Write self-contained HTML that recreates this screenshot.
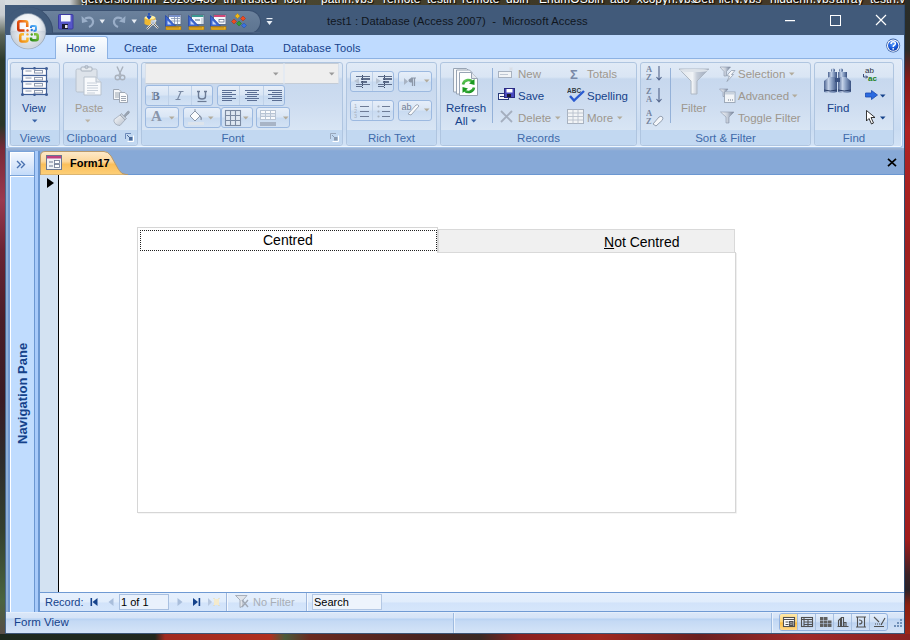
<!DOCTYPE html>
<html><head><meta charset="utf-8">
<style>
*{margin:0;padding:0;box-sizing:border-box}
html,body{width:910px;height:640px;overflow:hidden}
body{position:relative;font-family:"Liberation Sans",sans-serif;background:#2a2a22}
.a{position:absolute}
#desk-top{left:0;top:0;width:910px;height:5px;background:linear-gradient(90deg,#d8dcdf 0,#c9cdd0 70px,#3c3a2a 85px,#4a4630 300px,#3b3524 600px,#4b3c2a 910px)}
#desk-left{left:0;top:0;width:5px;height:640px;background:linear-gradient(180deg,#d2d6da 0,#c8ccd0 15px,#5a6458 35px,#2c3a2c 60px,#2a3628 125px,#7a2a3a 150px,#9a3a50 200px,#6a2434 250px,#4a1e28 320px,#3a1c24 400px,#2e2c2c 460px,#34402e 530px,#4a6440 600px,#5a4a48 640px)}
#desk-right{left:905px;top:0;width:5px;height:640px;background:linear-gradient(180deg,#2a2e2a 0,#2a2c28 50px,#8a1a1a 80px,#b02424 130px,#a02020 250px,#b02a2a 400px,#a01c1c 540px,#3a2228 575px,#2a2228 590px,#8a2010 605px,#a02a1a 640px)}
#desk-bot{left:0;top:634px;width:910px;height:6px;background:linear-gradient(90deg,#1e2a1e 0,#22281e 155px,#a02a20 165px,#b03020 270px,#4a5a3a 285px,#6a2a20 310px,#4a2420 420px,#3a2a24 480px,#8a2020 520px,#a02820 600px,#6a2020 700px,#a02a2a 800px,#8a2222 910px)}
#win{left:5px;top:5px;width:900px;height:629px;background:#8fb0d8}
#title{left:5px;top:5px;width:899px;height:30px;background:#415a7a}
#tabrow{left:6px;top:35px;width:898px;height:113px;background:#bfdbff}
#ribbon{left:7px;top:58px;width:896px;height:90px;background:linear-gradient(180deg,#e2ebf7 0,#d6e3f4 40px,#cadcf2 70px,#d3e3f6 88px,#e8f2fd 89px);border:1px solid #a6c3e8;border-top-color:#8db2e3;border-left-color:#9dbde6;border-radius:3px 3px 3px 3px;box-shadow:inset 1px 0 0 #f4f9fe,inset -1px 0 0 #eef5fd, inset 0 -1px 0 #f0f7fe}
.grp{position:absolute;top:62px;height:84px;border:1px solid #afc5e0;border-radius:3px;background:linear-gradient(180deg,#e0eaf6 0,#d9e5f4 14px,#c7d8ee 16px,#cddcf0 40px,#d8e5f4 67px)}
.glab{position:absolute;left:0;right:0;bottom:0;height:15px;background:#c2d8f1;color:#3e6aaa;font-size:11.5px;text-align:center;line-height:normal;padding-top:1.5px;border-radius:0 0 3px 3px;white-space:nowrap}
#navpane{left:10px;top:151px;width:25px;height:461px;background:#c0dcfe;border-left:1px solid #fff}
#docrow{left:40px;top:151px;width:864px;height:24px;background:#87a9d7;border-bottom:1px solid #6b97d1}
#recsel{left:40px;top:175px;width:18px;height:417px;background:#d3e2f2}
#form{left:58px;top:175px;width:846px;height:417px;background:#fff;border-left:1px solid #000}
#recbar{left:40px;top:592px;width:864px;height:20px;background:linear-gradient(180deg,#e6f0fd 0,#e1edfc 50%,#d2e3fa 55%,#d6e6fb 100%);border-top:1px solid #6f9ad3;border-bottom:1px solid #6f9ad3}
#status{left:5px;top:612px;width:899px;height:21px;background:linear-gradient(180deg,#f0f6fe 0,#dae7f8 1px,#d4e3f7 6px,#b6d1f2 7px,#c4d9f4 9px,#d3e3f7 20px)}
.tt{position:absolute;white-space:nowrap}
</style></head><body>
<div id="desk-top" class="a"></div>
<div id="desk-left" class="a"></div>
<div class="a" style="left:0;top:0;width:910px;height:5px;overflow:hidden"><div class="tt" style="left:81px;top:-8px;font-size:12px;color:#fff;text-shadow:1px 1px 1px #000">getversionnnn_20200430_thr trusted_locn</div><div class="tt" style="left:321px;top:-8px;font-size:12px;color:#fff;text-shadow:1px 1px 1px #000">pathn.vbs</div><div class="tt" style="left:383px;top:-8px;font-size:12px;color:#fff;text-shadow:1px 1px 1px #000">remote_testin</div><div class="tt" style="left:462px;top:-8px;font-size:12px;color:#fff;text-shadow:1px 1px 1px #000">remote_dbin</div><div class="tt" style="left:539px;top:-8px;font-size:12px;color:#fff;text-shadow:1px 1px 1px #000">EnumOSbin</div><div class="tt" style="left:610px;top:-8px;font-size:12px;color:#fff;text-shadow:1px 1px 1px #000">ado_xcopyn.vbs</div><div class="tt" style="left:692px;top:-8px;font-size:12px;color:#fff;text-shadow:1px 1px 1px #000">GetFileN.vbs</div><div class="tt" style="left:770px;top:-8px;font-size:12px;color:#fff;text-shadow:1px 1px 1px #000">hiddenn.vbs</div><div class="tt" style="left:836px;top:-8px;font-size:12px;color:#fff;text-shadow:1px 1px 1px #000">array_testn.vbs</div></div>

<div id="desk-right" class="a"></div>
<div id="desk-bot" class="a"></div>
<div id="win" class="a"></div>
<div id="title" class="a"></div>
<div id="tabrow" class="a"></div>
<!-- QAT -->
<div class="a" style="left:40px;top:10px;width:221px;height:24px;border-radius:0 12px 12px 0;background:#3a5070"></div>
<div class="a" style="left:40px;top:11px;width:220px;height:22px;border-radius:0 11px 11px 0;background:linear-gradient(180deg,#6b819c 0,#637a96 50%,#5d7490 100%)"></div>
<div class="a" style="left:40px;top:32px;width:220px;height:1px;background:#4a6080"></div>

<!-- QAT icons -->
<svg class="a" style="left:58px;top:14px" width="16" height="16" viewBox="0 0 16 16">
<rect x="0.5" y="0.5" width="14.5" height="14.5" rx="1" fill="#5656c8" stroke="#3a3aa0"/>
<rect x="3" y="1" width="9.5" height="6.5" fill="#f4f6fb"/>
<rect x="4" y="10" width="6" height="5" fill="#1a1a30"/><rect x="7" y="11" width="2.5" height="3" fill="#e8e8f0"/>
</svg>
<svg class="a" style="left:81px;top:15px" width="14" height="13" viewBox="0 0 14 13">
<path d="M4 3.5 Q11 1 12 6 Q12.5 10 8 12" fill="none" stroke="#9aaec8" stroke-width="2.2"/>
<path d="M0.5 1 L1 8 L7 6.5Z" fill="#9aaec8"/>
</svg>
<svg class="a" style="left:112px;top:15px" width="14" height="13" viewBox="0 0 14 13">
<path d="M10 3.5 Q3 1 2 6 Q1.5 10 6 12" fill="none" stroke="#9aaec8" stroke-width="2.2"/>
<path d="M13.5 1 L13 8 L7 6.5Z" fill="#9aaec8"/>
</svg>
<svg class="a" style="left:99px;top:19px" width="7" height="5"><path d="M0.5 0.5 L6 0.5 L3.2 4.5Z" fill="#e6ebf2"/></svg>
<svg class="a" style="left:131px;top:19px" width="7" height="5"><path d="M0.5 0.5 L6 0.5 L3.2 4.5Z" fill="#e6ebf2"/></svg>
<svg class="a" style="left:143px;top:13px" width="17" height="17" viewBox="0 0 17 17">
<ellipse cx="7" cy="5" rx="5.5" ry="2.5" fill="#fff0a0"/>
<path d="M1.5 5 L1.5 11 Q7 14 12.5 11 L12.5 5 Q7 8 1.5 5Z" fill="#f0b830"/>
<path d="M6 0 L6 5 M4 3 L6 5.5 L8 3" stroke="#1a4ac0" stroke-width="1.5" fill="none"/>
<path d="M4 16 L11 9 M9 9 L15 15 M11 9 L13 7" stroke="#e8e8e8" stroke-width="2"/>
<path d="M4 16 L11 9 M9 9 L15 15" stroke="#404040" stroke-width="0.8"/>
<circle cx="10" cy="9" r="2.5" fill="#c0d0e8" opacity="0.8"/>
</svg>
<svg class="a" style="left:165px;top:14px" width="17" height="16" viewBox="0 0 17 16">
<rect x="3.5" y="0.5" width="12.5" height="10" fill="#f4f8fc" stroke="#60708a"/>
<rect x="4" y="1" width="11.5" height="2" fill="#7890c8"/>
<path d="M6 4.5 h9 M6 7 h9 M9.5 3 v7.5 M12.5 3 v7.5" stroke="#8090b0" stroke-width="0.8"/>
<path d="M0.5 1.5 L0.5 12.5 L11 12.5Z" fill="#3c66d0" stroke="#2a4aa8" stroke-width="0.8"/>
<path d="M2.5 6.5 L2.5 10.5 L6.5 10.5Z" fill="#c8d8f8"/>
<rect x="1" y="12.5" width="15" height="3.5" fill="#e8b020" stroke="#a07010" stroke-width="0.6"/>
<path d="M3 13 v1.5 M5 13 v1.5 M7 13 v1.5 M9 13 v1.5 M11 13 v1.5 M13 13 v1.5" stroke="#805010" stroke-width="0.6"/>
</svg><svg class="a" style="left:188px;top:14px" width="17" height="16" viewBox="0 0 17 16">
<rect x="3.5" y="0.5" width="12.5" height="10" fill="#f4f8fc" stroke="#60708a"/>
<rect x="4" y="1" width="11.5" height="2" fill="#3a9890"/>
<rect x="7" y="5" width="5" height="2" fill="#a0b0c0"/><rect x="13" y="4" width="2" height="6" fill="#d0d8e0"/>
<path d="M0.5 1.5 L0.5 12.5 L11 12.5Z" fill="#3c66d0" stroke="#2a4aa8" stroke-width="0.8"/>
<path d="M2.5 6.5 L2.5 10.5 L6.5 10.5Z" fill="#c8d8f8"/>
<rect x="1" y="12.5" width="15" height="3.5" fill="#e8b020" stroke="#a07010" stroke-width="0.6"/>
<path d="M3 13 v1.5 M5 13 v1.5 M7 13 v1.5 M9 13 v1.5 M11 13 v1.5 M13 13 v1.5" stroke="#805010" stroke-width="0.6"/>
</svg><svg class="a" style="left:210px;top:14px" width="17" height="16" viewBox="0 0 17 16">
<rect x="3.5" y="0.5" width="12.5" height="10" fill="#f4f8fc" stroke="#60708a"/>
<rect x="4" y="1" width="11.5" height="2" fill="#d04878"/>
<rect x="9" y="5.5" width="5" height="2.5" fill="#fff" stroke="#506080" stroke-width="0.7"/>
<path d="M0.5 1.5 L0.5 12.5 L11 12.5Z" fill="#3c66d0" stroke="#2a4aa8" stroke-width="0.8"/>
<path d="M2.5 6.5 L2.5 10.5 L6.5 10.5Z" fill="#c8d8f8"/>
<rect x="1" y="12.5" width="15" height="3.5" fill="#e8b020" stroke="#a07010" stroke-width="0.6"/>
<path d="M3 13 v1.5 M5 13 v1.5 M7 13 v1.5 M9 13 v1.5 M11 13 v1.5 M13 13 v1.5" stroke="#805010" stroke-width="0.6"/>
</svg>
<svg class="a" style="left:231px;top:13px" width="17" height="17" viewBox="0 0 17 17">
<path d="M6.5 0.5 L9 3 L6.5 5.5 L4 3Z" fill="#f0b818" stroke="#b08010" stroke-width="0.5"/>
<path d="M12 3 L14.5 5.5 L12 8 L9.5 5.5Z" fill="#f04a20" stroke="#a03010" stroke-width="0.5"/>
<path d="M3 6 L5.5 8.5 L3 11 L0.5 8.5Z" fill="#f04a20" stroke="#a03010" stroke-width="0.5"/>
<path d="M8 8 L10.5 10.5 L8 13 L5.5 10.5Z" fill="#30a030" stroke="#207020" stroke-width="0.5"/>
<path d="M13 10 L15.5 12.5 L13 15 L10.5 12.5Z" fill="#3a70e0" stroke="#2050a0" stroke-width="0.5"/>
</svg>
<svg class="a" style="left:266px;top:18px" width="7" height="8" viewBox="0 0 7 8">
<rect x="0.5" y="0" width="6" height="1.2" fill="#e8eef6"/>
<path d="M0.5 3 L6.5 3 L3.5 7Z" fill="#e8eef6"/>
</svg>
<div class="tt" style="left:327px;top:15px;font-size:11.2px;letter-spacing:0.09px;color:#10161e">test1 : Database (Access 2007)&nbsp; -&nbsp; Microsoft Access</div>
<div class="a" style="left:785px;top:20px;width:10px;height:1px;background:#fff;box-shadow:0 0.5px 0 rgba(255,255,255,0.5)"></div>
<div class="a" style="left:830px;top:15px;width:11px;height:11px;border:1px solid #fff"></div>
<svg class="a" style="left:875px;top:14px" width="12" height="12" viewBox="0 0 12 12"><path d="M1 1 L11 11 M11 1 L1 11" stroke="#fff" stroke-width="1.2"/></svg>
<!-- office button ring -->
<div class="a" style="left:5px;top:5px;width:60px;height:28px;overflow:hidden"><div class="a" style="left:-1px;top:2px;width:49px;height:49px;border-radius:50%;background:#415a7a;border:none;box-shadow:inset -1px 0 0 #3a4f6e"></div></div>
<svg class="a" style="left:9px;top:12px" width="39" height="39" viewBox="0 0 39 39">
<defs>
<radialGradient id="ob" cx="50%" cy="35%" r="60%"><stop offset="0" stop-color="#ffffff"/><stop offset="0.55" stop-color="#eef1f5"/><stop offset="1" stop-color="#b9c3cf"/></radialGradient>
<linearGradient id="obr" x1="0" y1="0" x2="0" y2="1"><stop offset="0" stop-color="#e8a070"/><stop offset="1" stop-color="#d04010"/></linearGradient>
</defs>
<circle cx="19.1" cy="19.3" r="18" fill="#9aa8b8"/>
<circle cx="19.1" cy="19.3" r="17.2" fill="url(#ob)"/>
<defs><linearGradient id="ob2" x1="0" y1="0" x2="0" y2="1"><stop offset="0" stop-color="#ffffff" stop-opacity="0"/><stop offset="0.45" stop-color="#ffffff" stop-opacity="0"/><stop offset="0.5" stop-color="#a8b4c4" stop-opacity="0.3"/><stop offset="0.7" stop-color="#ffffff" stop-opacity="0.15"/><stop offset="1" stop-color="#ffffff" stop-opacity="0.4"/></linearGradient></defs><circle cx="19.1" cy="19.3" r="17.2" fill="url(#ob2)"/>
<!-- red -->
<defs>
<linearGradient id="lr" x1="0" y1="1" x2="1" y2="0"><stop offset="0" stop-color="#c83008"/><stop offset="0.6" stop-color="#e85a10"/><stop offset="1" stop-color="#f8a030"/></linearGradient>
<linearGradient id="lb" x1="0" y1="1" x2="1" y2="0"><stop offset="0" stop-color="#1a6ad8"/><stop offset="1" stop-color="#60b8f8"/></linearGradient>
<linearGradient id="ly" x1="0" y1="1" x2="1" y2="0"><stop offset="0" stop-color="#f08810"/><stop offset="1" stop-color="#ffd040"/></linearGradient>
<linearGradient id="lg" x1="0" y1="1" x2="1" y2="0"><stop offset="0" stop-color="#2a8a18"/><stop offset="1" stop-color="#8ac840"/></linearGradient>
</defs>
<path d="M18.25 15 L18.25 11 Q18.25 9.25 16.5 9.25 L11 9.25 Q9.25 9.25 9.25 11 L9.25 16.75 Q9.25 18.5 11 18.5 L15.5 18.5" fill="none" stroke="url(#lr)" stroke-width="2.6"/>
<path d="M22 16 L22 15 Q22 14 23 14 L26 14 Q27 14 27 15 L27 17.75 Q27 18.75 26 18.75 L24.5 18.75" fill="none" stroke="url(#lb)" stroke-width="2"/>
<path d="M15 22.25 L13 22.25 Q11.25 22.25 11.25 24 L11.25 27.75 Q11.25 29.5 13 29.5 L16.75 29.5 Q18.5 29.5 18.5 27.75 L18.5 25.5" fill="none" stroke="url(#ly)" stroke-width="2.6"/>
<path d="M25 22.25 L27 22.25 Q28.75 22.25 28.75 24 L28.75 26.5 Q28.75 28.25 27 28.25 L23.75 28.25 Q22 28.25 22 26.5 L22 25.5" fill="none" stroke="url(#lg)" stroke-width="2.6"/>
<circle cx="18.5" cy="18.5" r="1.2" fill="#e85010"/>
<circle cx="22.75" cy="18" r="1.2" fill="#2a78d8"/>
<circle cx="18.5" cy="22.4" r="1.2" fill="#f8b030"/>
<circle cx="22.75" cy="22.5" r="1.2" fill="#50a028"/>
</svg>


<!--TABS-->

<div class="a" style="left:55px;top:36px;width:53px;height:23px;border:1px solid #8db2e3;border-bottom:none;border-radius:3px 3px 0 0;background:linear-gradient(180deg,#fbfdff 0,#eef4fb 50%,#e4edf8 100%)"></div>
<div class="tt" style="left:66px;top:42px;font-size:11px;color:#15428b">Home</div>
<div class="tt" style="left:124px;top:42px;font-size:11px;color:#15428b">Create</div>
<div class="tt" style="left:187px;top:42px;font-size:11px;color:#15428b">External Data</div>
<div class="tt" style="left:283px;top:42px;font-size:11px;letter-spacing:0.15px;color:#15428b">Database Tools</div>
<svg class="a" style="left:885px;top:38px" width="16" height="16" viewBox="0 0 16 16">
<defs><radialGradient id="hg" cx="45%" cy="35%" r="65%"><stop offset="0" stop-color="#5a9cf8"/><stop offset="0.6" stop-color="#1c5ee0"/><stop offset="1" stop-color="#0e3ca8"/></radialGradient></defs>
<circle cx="8.2" cy="7.6" r="7" fill="#3a62a8"/>
<circle cx="8.2" cy="7.6" r="6.2" fill="#fff"/>
<circle cx="8.2" cy="7.6" r="5.2" fill="url(#hg)"/>
<path d="M6 6 Q6 3.8 8.2 3.8 Q10.4 3.8 10.4 5.6 Q10.4 6.9 9 7.5 Q8.2 7.9 8.2 9" fill="none" stroke="#fff" stroke-width="1.5"/>
<circle cx="8.2" cy="10.8" r="0.9" fill="#fff"/>
</svg>
<div id="ribbon" class="a"></div>
<div class="a" style="left:56px;top:58px;width:51px;height:2px;background:#e3ecf8"></div>
<div class="grp" style="left:10px;width:50px"><div class="glab">Views</div></div>
<div class="grp" style="left:63px;width:75px"><div class="glab" style="text-align:left;padding-left:2.5px;letter-spacing:0.1px">Clipboard</div></div>
<div class="grp" style="left:141px;width:202px"><div class="glab" style="padding-right:18px">Font</div></div>
<div class="grp" style="left:346px;width:91px"><div class="glab">Rich Text</div></div>
<div class="grp" style="left:440px;width:197px"><div class="glab">Records</div></div>
<div class="grp" style="left:640px;width:171px"><div class="glab">Sort &amp; Filter</div></div>
<div class="grp" style="left:814px;width:80px"><div class="glab">Find</div></div>

<!--RIB1-->
<!-- Views -->
<svg class="a" style="left:21px;top:67px" width="27" height="29" viewBox="0 0 27 29">
<rect x="1.5" y="1.5" width="24" height="7.0" fill="#fdfdfe" stroke="#3f5e96" stroke-width="1.2"/><rect x="1.5" y="8.5" width="24" height="6.0" fill="#fdfdfe" stroke="#3f5e96" stroke-width="1.2"/><rect x="1.5" y="14.5" width="24" height="7.0" fill="#fdfdfe" stroke="#3f5e96" stroke-width="1.2"/><rect x="1.5" y="21.5" width="24" height="6.0" fill="#fdfdfe" stroke="#3f5e96" stroke-width="1.2"/><rect x="13.5" y="3.5" width="8" height="2.5" fill="none" stroke="#8e9ab0" stroke-width="1"/><path d="M4.5 4.0 h6" stroke="#8e9ab0" stroke-width="1"/><rect x="13.5" y="10.5" width="8" height="2.5" fill="none" stroke="#8e9ab0" stroke-width="1"/><path d="M4.5 11.0 h6" stroke="#8e9ab0" stroke-width="1"/><rect x="13.5" y="16.5" width="8" height="2.5" fill="none" stroke="#8e9ab0" stroke-width="1"/><path d="M4.5 17.0 h6" stroke="#8e9ab0" stroke-width="1"/><rect x="13.5" y="23.5" width="8" height="2.5" fill="none" stroke="#8e9ab0" stroke-width="1"/><path d="M4.5 24.0 h6" stroke="#8e9ab0" stroke-width="1"/>
<g fill="#3f5e96"><circle cx="1.5" cy="1.5" r="1.5"/><circle cx="25.5" cy="1.5" r="1.5"/><circle cx="1.5" cy="27.5" r="1.5"/><circle cx="25.5" cy="27.5" r="1.5"/><rect x="12.5" y="0" width="2" height="2.5"/><rect x="0" y="13.5" width="2" height="2"/><rect x="25" y="13.5" width="2" height="2"/><rect x="12.5" y="26.5" width="2" height="2.5"/></g>
</svg>
<div class="tt" style="left:22px;top:102px;font-size:11px;color:#15428b">View</div>
<svg class="a" style="left:32px;top:119px" width="6" height="4"><path d="M0 0.5 L5.5 0.5 L2.75 3.5Z" fill="#3a64a8"/></svg>
<!-- Clipboard -->
<svg class="a" style="left:75px;top:65px" width="28" height="32" viewBox="0 0 28 32">
<rect x="1" y="4" width="21" height="23" rx="1.5" fill="#dde3ea" stroke="#b8c2ce"/>
<rect x="6" y="2" width="11" height="4" rx="1" fill="#e6ebf0" stroke="#a8b2be"/>
<circle cx="11.5" cy="2" r="1.6" fill="none" stroke="#a8b2be"/>
<path d="M9 12 L21 12 L26 17 L26 30 L9 30Z" fill="#f8fafc" stroke="#b8c2ce"/>
<path d="M21 12 L21 17 L26 17" fill="#e0e6ec" stroke="#b8c2ce"/>
<path d="M12 18 h10 M12 20.5 h11 M12 23 h11 M12 25.5 h11 M12 28 h8" stroke="#c8d0da" stroke-width="1"/>
</svg>
<div class="tt" style="left:75px;top:102px;font-size:11px;color:#a39c92">Paste</div>
<svg class="a" style="left:85px;top:119px" width="6" height="4"><path d="M0 0.5 L5.5 0.5 L2.75 3.5Z" fill="#bcb4a6"/></svg>
<svg class="a" style="left:114px;top:66px" width="12" height="15" viewBox="0 0 12 15">
<path d="M3 0.5 L7 9 M9 0.5 L5 9" stroke="#a9b1bc" stroke-width="1.4"/>
<circle cx="3.5" cy="11.5" r="2.3" fill="none" stroke="#a9b1bc" stroke-width="1.4"/>
<circle cx="8.5" cy="11.5" r="2.3" fill="none" stroke="#a9b1bc" stroke-width="1.4"/>
</svg>
<svg class="a" style="left:113px;top:89px" width="16" height="14" viewBox="0 0 16 14">
<path d="M0.5 0.5 h5.5 l2.5 2.5 v7.5 h-8z" fill="#f6f8fa" stroke="#9ea8b6"/>
<path d="M6.5 3.5 h5.5 l2.5 2.5 v7.5 h-8z" fill="#fafbfc" stroke="#9ea8b6"/>
<path d="M2 4 h4 M2 6 h4 M2 8 h4 M8 7.5 h5 M8 9.5 h5 M8 11.5 h5" stroke="#8892a0" stroke-width="0.8"/>
</svg>
<svg class="a" style="left:113px;top:110px" width="17" height="16" viewBox="0 0 17 16">
<defs><linearGradient id="fp" x1="0" y1="0" x2="1" y2="1"><stop offset="0" stop-color="#fafbfc"/><stop offset="1" stop-color="#b8c0cc"/></linearGradient></defs>
<path d="M11 5.5 L14.5 1.5 Q15.5 0.8 16.2 1.5 Q16.8 2.3 16 3.2 L12 7Z" fill="#9aa4b2" stroke="#7e8896" stroke-width="0.5"/>
<path d="M8.5 3.5 L13.5 8.5 L12 10 L7 5Z" fill="#c4ccd6" stroke="#8c96a4" stroke-width="0.6"/>
<path d="M7 5 L12 10 L7 15.5 Q4 15.5 2 13.5 Q0.5 11.5 1 9.5Z" fill="url(#fp)" stroke="#98a2b0" stroke-width="0.7"/>
</svg>
<svg class="a" style="left:125px;top:133px" width="9" height="9" viewBox="0 0 9 9">
<path d="M0.5 6 V0.5 H6" fill="none" stroke="#6a88b8" stroke-width="1"/>
<path d="M2.5 8.5 H8.5 V2.5" fill="none" stroke="#ffffff" stroke-width="1"/>
<rect x="4" y="4" width="3.5" height="3.5" fill="#4a6a9a"/>
<path d="M2 2 L5 5" stroke="#4a6a9a" stroke-width="1"/>
</svg>
<!-- Font -->
<div class="a" style="left:145px;top:63px;width:139px;height:21px;background:#eeeeee;border:1px solid #c4ccd6;border-left-color:#d8e0ea;border-right-color:#e4eaf2"></div>
<svg class="a" style="left:273px;top:72px" width="6" height="4"><path d="M0 0.5 L5.5 0.5 L2.75 3.5Z" fill="#9a9a9a"/></svg>
<div class="a" style="left:284px;top:63px;width:55px;height:21px;background:#eeeeee;border:1px solid #c4ccd6;border-left-color:#e4eaf2;border-right-color:#d8e0ea"></div>
<svg class="a" style="left:329px;top:72px" width="6" height="4"><path d="M0 0.5 L5.5 0.5 L2.75 3.5Z" fill="#9a9a9a"/></svg>
<div class="a" style="left:145px;top:85px;width:68px;height:21px;border:1px solid #9cb9e0;border-radius:3px;background:linear-gradient(180deg,#e6eef9 0,#dae6f5 45%,#c9dbf1 55%,#d3e2f4 100%)"></div><div class="a" style="left:168px;top:86px;width:1px;height:19px;background:#bfd1e8"></div><div class="a" style="left:191px;top:86px;width:1px;height:19px;background:#bfd1e8"></div><div class="a" style="left:217px;top:85px;width:68px;height:21px;border:1px solid #9cb9e0;border-radius:3px;background:linear-gradient(180deg,#e6eef9 0,#dae6f5 45%,#c9dbf1 55%,#d3e2f4 100%)"></div><div class="a" style="left:239px;top:86px;width:1px;height:19px;background:#bfd1e8"></div><div class="a" style="left:263px;top:86px;width:1px;height:19px;background:#bfd1e8"></div><div class="a" style="left:145px;top:107px;width:34px;height:21px;border:1px solid #9cb9e0;border-radius:3px;background:linear-gradient(180deg,#e6eef9 0,#dae6f5 45%,#c9dbf1 55%,#d3e2f4 100%)"></div><div class="a" style="left:183px;top:107px;width:38px;height:21px;border:1px solid #9cb9e0;border-radius:3px;background:linear-gradient(180deg,#e6eef9 0,#dae6f5 45%,#c9dbf1 55%,#d3e2f4 100%)"></div><div class="a" style="left:221px;top:107px;width:32px;height:21px;border:1px solid #9cb9e0;border-radius:3px;background:linear-gradient(180deg,#e6eef9 0,#dae6f5 45%,#c9dbf1 55%,#d3e2f4 100%)"></div><div class="a" style="left:256px;top:107px;width:34px;height:21px;border:1px solid #9cb9e0;border-radius:3px;background:linear-gradient(180deg,#e6eef9 0,#dae6f5 45%,#c9dbf1 55%,#d3e2f4 100%)"></div>
<svg class="a" style="left:148px;top:88px" width="64" height="16" viewBox="0 0 64 16">
<text x="3.5" y="11.5" font-family="Liberation Serif" font-weight="bold" font-size="12.5" fill="#6c7b95">B</text>
<path d="M5.5 3.5 v8" stroke="#c8d2e0" stroke-width="0.6"/>
<path d="M33 3.5 L29.5 11.5 M30.5 3.5 h5 M27.5 11.5 h5" stroke="#7a8aa4" stroke-width="1.2" fill="none"/>
<path d="M50.5 3.5 v5 Q50.5 11 54 11 Q57.5 11 57.5 8.5 v-5 M49 3.5 h3 M56 3.5 h3" stroke="#6c7b95" stroke-width="1.4" fill="none"/>
<path d="M49.5 13.5 h9" stroke="#6c7b95" stroke-width="1.2"/>
</svg>
<div class="tt" style="left:151px;top:108px;font-family:'Liberation Serif',serif;font-weight:bold;font-size:15px;color:#8a96aa">A</div>
<svg class="a" style="left:217px;top:85px" width="70" height="20" viewBox="0 0 70 20">
<g stroke="#5a6e94" stroke-width="1">
<path d="M5 5.5 h14 M5 7.5 h10 M5 9.5 h14 M5 11.5 h10 M5 13.5 h14 M5 15.5 h10"/>
<path d="M28 5.5 h14 M30 7.5 h10 M28 9.5 h14 M30 11.5 h10 M28 13.5 h14 M30 15.5 h10"/>
<path d="M51 5.5 h14 M55 7.5 h10 M51 9.5 h14 M55 11.5 h10 M51 13.5 h14 M55 15.5 h10"/>
</g></svg>
<svg class="a" style="left:169px;top:116px" width="6" height="4"><path d="M0 0.5 L5.5 0.5 L2.75 3.5Z" fill="#b2ab9c"/></svg>
<svg class="a" style="left:187px;top:109px" width="18" height="16" viewBox="0 0 18 16">
<path d="M3 7 L8 2 L13 7 L8 12Z" fill="#fafbfc" stroke="#8a96a8" stroke-width="1"/>
<path d="M8 2 L8 0" stroke="#8a96a8"/>
<path d="M13 7 Q15 9 14 11" stroke="#8a96a8" fill="none" stroke-width="1.4"/>
<rect x="1" y="13" width="16" height="3" fill="#dde4ec"/>
</svg>
<svg class="a" style="left:208px;top:116px" width="6" height="4"><path d="M0 0.5 L5.5 0.5 L2.75 3.5Z" fill="#b2ab9c"/></svg>
<svg class="a" style="left:224px;top:109px" width="18" height="18" viewBox="0 0 18 18">
<rect x="1" y="1" width="15" height="15" fill="#dfe7f2"/>
<g stroke="#7b8aa2" stroke-width="1.1" fill="none"><rect x="1.5" y="1.5" width="15" height="15"/><path d="M6.5 1.5 v15 M11.5 1.5 v15 M1.5 6.5 h15 M1.5 11.5 h15"/></g>
</svg>
<svg class="a" style="left:243px;top:116px" width="6" height="4"><path d="M0 0.5 L5.5 0.5 L2.75 3.5Z" fill="#b2ab9c"/></svg>
<svg class="a" style="left:260px;top:110px" width="17" height="17" viewBox="0 0 17 17">
<rect x="0" y="0" width="16" height="10" fill="#b8c4d4"/>
<g fill="#fafbfd"><rect x="1" y="1" width="4" height="2"/><rect x="6" y="1" width="4" height="2"/><rect x="11" y="1" width="4" height="2"/><rect x="1" y="7" width="4" height="2"/><rect x="6" y="7" width="4" height="2"/><rect x="11" y="7" width="4" height="2"/></g>
<g fill="#dfe5ee"><rect x="1" y="4" width="4" height="2"/><rect x="6" y="4" width="4" height="2"/><rect x="11" y="4" width="4" height="2"/></g>
<rect x="0" y="12" width="16" height="4" fill="#a8b4c6"/>
</svg>
<svg class="a" style="left:283px;top:116px" width="6" height="4"><path d="M0 0.5 L5.5 0.5 L2.75 3.5Z" fill="#b2ab9c"/></svg>
<svg class="a" style="left:330px;top:133px" width="9" height="9" viewBox="0 0 9 9">
<path d="M0.5 6 V0.5 H6" fill="none" stroke="#98a6ba" stroke-width="1"/>
<path d="M2.5 8.5 H8.5 V2.5" fill="none" stroke="#ffffff" stroke-width="1"/>
<rect x="4" y="4" width="3.5" height="3.5" fill="#8a9ab0"/>
<path d="M2 2 L5 5" stroke="#8a9ab0" stroke-width="1"/>
</svg>

<!--RIB2-->
<!-- Rich text -->
<div class="a" style="left:350px;top:71px;width:44px;height:21px;border:1px solid #9cb9e0;border-radius:3px;background:linear-gradient(180deg,#e6eef9 0,#dae6f5 45%,#c9dbf1 55%,#d3e2f4 100%)"></div><div class="a" style="left:372px;top:72px;width:1px;height:19px;background:#bfd1e8"></div><div class="a" style="left:398px;top:71px;width:34px;height:21px;border:1px solid #9cb9e0;border-radius:3px;background:linear-gradient(180deg,#e6eef9 0,#dae6f5 45%,#c9dbf1 55%,#d3e2f4 100%)"></div><div class="a" style="left:350px;top:100px;width:44px;height:21px;border:1px solid #9cb9e0;border-radius:3px;background:linear-gradient(180deg,#e6eef9 0,#dae6f5 45%,#c9dbf1 55%,#d3e2f4 100%)"></div><div class="a" style="left:372px;top:101px;width:1px;height:19px;background:#bfd1e8"></div><div class="a" style="left:398px;top:100px;width:34px;height:21px;border:1px solid #9cb9e0;border-radius:3px;background:linear-gradient(180deg,#e6eef9 0,#dae6f5 45%,#c9dbf1 55%,#d3e2f4 100%)"></div>
<svg class="a" style="left:350px;top:71px" width="84" height="52" viewBox="0 0 84 52">
<g stroke="#5e6e8c" stroke-width="1">
<path d="M6 5.5 h14 M6 13.5 h14 M6 15.5 h6 M28 5.5 h14 M28 13.5 h14 M28 15.5 h6"/>
</g>
<g fill="#5e6e8c"><rect x="11" y="7" width="9" height="2"/><rect x="11" y="10" width="6" height="2"/><rect x="33" y="7" width="9" height="2"/><rect x="33" y="10" width="6" height="2"/></g>
<g stroke="#3a4a6a" stroke-width="1" stroke-dasharray="1 1"><path d="M12.5 4 v14 M34.5 4 v14"/></g>
<path d="M4 10 L9 7 L9 13Z" fill="#b8c4d4"/><path d="M31 10 L26 7 L26 13Z" fill="#b8c4d4"/>
<path d="M54 7 L58 10.5 L54 14Z" fill="#a9b4c4"/>
<path d="M61 7 h5 M62.5 7 v8 M64.5 7 v8" stroke="#8c97a8" stroke-width="1.2"/><path d="M62 7 Q58.5 7.5 58.5 9.5 Q58.5 11.5 62 11.5Z" fill="#8c97a8"/>
<g font-family="Liberation Sans" font-size="5.5" fill="#a8b2c0"><text x="4" y="37">1</text><text x="4" y="42">2</text><text x="4" y="47">3</text></g>
<g stroke="#6e7c96" stroke-width="1.2"><path d="M10 35.5 h9 M10 40.5 h9 M10 45.5 h9 M32 35.5 h8 M32 40.5 h8 M32 45.5 h8"/></g>
<g fill="#a8b2c0"><circle cx="28.5" cy="35.5" r="1.1"/><circle cx="28.5" cy="40.5" r="1.1"/><circle cx="28.5" cy="45.5" r="1.1"/></g>
<rect x="51" y="31" width="9" height="8" fill="#e4eaf2"/>
<text x="51.5" y="38.5" font-family="Liberation Sans" font-size="9" fill="#6e7e98">ab</text>
<path d="M58 43 L66 34 Q68 33 69 35 L61 44 Z" fill="#fafbfc" stroke="#95a0b0" stroke-width="0.9"/>
</svg>
<svg class="a" style="left:424px;top:79px" width="6" height="4"><path d="M0 0.5 L5.5 0.5 L2.75 3.5Z" fill="#b2ab9c"/></svg><svg class="a" style="left:424px;top:108px" width="6" height="4"><path d="M0 0.5 L5.5 0.5 L2.75 3.5Z" fill="#b2ab9c"/></svg>
<!-- Records -->
<svg class="a" style="left:452px;top:67px" width="28" height="30" viewBox="0 0 28 30">
<defs><linearGradient id="rg" x1="0" y1="0" x2="1" y2="1"><stop offset="0" stop-color="#6ad060"/><stop offset="1" stop-color="#108a18"/></linearGradient></defs>
<g stroke="#98a4b4" stroke-width="1">
<path d="M1.5 1.5 h13 l3 3 v20.5 h-16z" fill="#f8f9fa"/>
<path d="M4.5 3 h13 l3 3 v21 h-16z" fill="#fbfbfc"/>
<path d="M7.5 5.5 h12 l6 6 v17 h-18z" fill="#ffffff"/>
<path d="M19.5 5.5 v6 h6" fill="#e4e8ee"/>
</g>
<path d="M11 17.5 A5.5 5.5 0 0 1 21 15.5" fill="none" stroke="url(#rg)" stroke-width="2.6"/>
<path d="M22.5 12 L22.5 18 L17 16.5Z" fill="#1a9a20"/>
<path d="M22 20.5 A5.5 5.5 0 0 1 12 22.5" fill="none" stroke="url(#rg)" stroke-width="2.6"/>
<path d="M10.5 26 L10.5 20 L16 21.5Z" fill="#1a9a20"/>
</svg>
<div class="tt" style="left:446px;top:102px;font-size:11.5px;color:#15428b">Refresh</div>
<div class="tt" style="left:455px;top:115px;font-size:11.5px;color:#15428b">All</div>
<svg class="a" style="left:471px;top:119px" width="6" height="4"><path d="M0 0.5 L5.5 0.5 L2.75 3.5Z" fill="#3a64a8"/></svg>
<div class="a" style="left:492px;top:68px;width:1px;height:55px;background:#94b1d8"></div>
<svg class="a" style="left:498px;top:66px" width="17" height="14" viewBox="0 0 17 14">
<rect x="0.5" y="5.5" width="13" height="6" fill="#f2f4f6" stroke="#a8b2c0"/>
<path d="M2 8.5 h8" stroke="#c0c8d4"/>
<path d="M13 1 v4 M11 3 h4 M11.5 1.5 l3 3 M14.5 1.5 l-3 3" stroke="#d8dde4" stroke-width="0.8"/>
</svg>
<div class="tt" style="left:518px;top:68px;font-size:11.5px;color:#9d978e">New</div>
<svg class="a" style="left:498px;top:88px" width="17" height="14" viewBox="0 0 17 14">
<rect x="0.5" y="5.5" width="10" height="6" fill="#f8f8fb" stroke="#2a3a7a"/>
<path d="M2 8.5 h7" stroke="#2a3a7a"/>
<rect x="6.5" y="0.5" width="10" height="9" fill="#4a4ac0" stroke="#2a2a80"/>
<rect x="8.5" y="1" width="6" height="3.5" fill="#fff"/>
<rect x="9" y="6" width="4" height="3" fill="#1a1a30"/>
</svg>
<div class="tt" style="left:518px;top:90px;font-size:11.5px;color:#15428b">Save</div>
<svg class="a" style="left:499px;top:109px" width="15" height="15" viewBox="0 0 15 15">
<path d="M2 2 L13 13 M13 2 L2 13" stroke="#a4aebe" stroke-width="1.8"/>
</svg>
<div class="tt" style="left:518px;top:112px;font-size:11.5px;color:#9d978e">Delete</div>
<svg class="a" style="left:555px;top:116px" width="6" height="4"><path d="M0 0.5 L5.5 0.5 L2.75 3.5Z" fill="#b2ab9c"/></svg>
<div class="tt" style="left:570px;top:67px;font-size:13px;color:#7a8aa8;font-weight:bold">&Sigma;</div>
<div class="tt" style="left:587px;top:68px;font-size:11.5px;color:#9d978e">Totals</div>
<svg class="a" style="left:567px;top:87px" width="19" height="15" viewBox="0 0 19 15">
<text x="0" y="6" font-family="Liberation Sans" font-weight="bold" font-size="6.5" fill="#303840">ABC</text>
<path d="M3 9 L7 13.5 L17 4" fill="none" stroke="#2a5ad0" stroke-width="2.4"/>
</svg>
<div class="tt" style="left:587px;top:90px;font-size:11.5px;color:#15428b">Spelling</div>
<svg class="a" style="left:567px;top:109px" width="17" height="15" viewBox="0 0 17 15">
<rect x="0.5" y="0.5" width="16" height="14" fill="#f2f4f6" stroke="#a8b2c0"/>
<path d="M0.5 4 h16 M0.5 7.5 h16 M0.5 11 h16 M6 0.5 v14 M11 0.5 v14" stroke="#b8c0cc" stroke-width="0.9"/>
</svg>
<div class="tt" style="left:587px;top:112px;font-size:11.5px;color:#9d978e">More</div>
<svg class="a" style="left:617px;top:116px" width="6" height="4"><path d="M0 0.5 L5.5 0.5 L2.75 3.5Z" fill="#b2ab9c"/></svg>
<!-- Sort & Filter -->
<svg class="a" style="left:646px;top:65px" width="18" height="62" viewBox="0 0 18 62">
<g font-family="Liberation Serif" font-size="8.5" fill="#76859e" font-weight="bold">
<text x="0" y="7">A</text><text x="0" y="15">Z</text>
<text x="0" y="29">Z</text><text x="0" y="37">A</text>
<text x="0" y="51">A</text><text x="0" y="59">Z</text>
</g>
<g stroke="#52648a" stroke-width="1.1" fill="none">
<path d="M13 1 v14 M10.5 12 L13 15 L15.5 12"/>
<path d="M13 23 v14 M10.5 34 L13 37 L15.5 34"/>
</g>
<path d="M7 59 L13 52 Q15 50.5 16.5 52 Q17.5 53.5 16 55.5 L10 61Z" fill="#f4f6f9" stroke="#8a96a8" stroke-width="0.9"/>
</svg>
<div class="a" style="left:670px;top:68px;width:1px;height:55px;background:#94b1d8"></div>
<svg class="a" style="left:678px;top:68px" width="32" height="27" viewBox="0 0 32 27">
<defs><linearGradient id="fg" x1="0" y1="0" x2="1" y2="0"><stop offset="0" stop-color="#dfe4ea"/><stop offset="0.45" stop-color="#f0f3f6"/><stop offset="0.6" stop-color="#c4ccd8"/><stop offset="1" stop-color="#98a4b8"/></linearGradient></defs>
<path d="M1 1 L31 1 L19 13 L19 26 L13 26 L13 13Z" fill="url(#fg)" stroke="#aeb8c4" stroke-width="1"/>
<ellipse cx="16" cy="2.5" rx="14" ry="1.6" fill="#dde3ea"/>
</svg>
<div class="tt" style="left:681px;top:102px;font-size:11.5px;color:#9d978e">Filter</div>
<svg class="a" style="left:719px;top:66px" width="17" height="17" viewBox="0 0 17 17">
<defs><linearGradient id="fn" x1="0" y1="0" x2="1" y2="0"><stop offset="0" stop-color="#f4f6f9"/><stop offset="0.5" stop-color="#c8d0dc"/><stop offset="1" stop-color="#6e7c94"/></linearGradient></defs>
<path d="M1 1 L11.5 1 L7.5 5.5 L7.5 10 L5 10 L5 5.5Z" fill="url(#fn)" stroke="#8a96a8" stroke-width="0.6"/>
<path d="M9 8 L12.5 4.5 L16 4.5 L12.5 8.5 L14.5 8.5 L8 15.5 L10.5 10 L8.5 10Z" fill="#f4f6f9" stroke="#8a96a8" stroke-width="0.7"/>
</svg>
<div class="tt" style="left:738px;top:68px;font-size:11.5px;color:#9d978e">Selection</div>
<svg class="a" style="left:789px;top:72px" width="6" height="4"><path d="M0 0.5 L5.5 0.5 L2.75 3.5Z" fill="#b2ab9c"/></svg>
<svg class="a" style="left:719px;top:88px" width="17" height="16" viewBox="0 0 17 16">
<path d="M0.5 1 L9 1 L6 4.5 L6 8.5 L4 8.5 L4 4.5Z" fill="url(#fn)" stroke="#8a96a8" stroke-width="0.6"/>
<rect x="5.5" y="4" width="10.5" height="10.5" fill="#f2f5f8" stroke="#98a4b4" stroke-width="0.9"/>
<rect x="6" y="4.5" width="9.5" height="2" fill="#c8d2de"/>
<path d="M9 12 h1 M11 12 h1 M13 12 h1" stroke="#5a6a80" stroke-width="0.9"/>
</svg>
<div class="tt" style="left:738px;top:90px;font-size:11.5px;color:#9d978e">Advanced</div>
<svg class="a" style="left:792px;top:94px" width="6" height="4"><path d="M0 0.5 L5.5 0.5 L2.75 3.5Z" fill="#b2ab9c"/></svg>
<svg class="a" style="left:720px;top:111px" width="15" height="13" viewBox="0 0 15 13">
<path d="M0.5 1 L14 1 L9 6 L9 12 L6 12 L6 6Z" fill="url(#fn)" stroke="#8a96a8" stroke-width="0.6"/>
</svg>
<div class="tt" style="left:738px;top:112px;font-size:11.5px;color:#9d978e">Toggle Filter</div>
<!-- Find -->
<svg class="a" style="left:823px;top:68px" width="29" height="27" viewBox="0 0 29 27">
<defs><linearGradient id="bg1" x1="0" y1="0" x2="1" y2="0"><stop offset="0" stop-color="#4a6290"/><stop offset="0.35" stop-color="#c4d2e8"/><stop offset="0.6" stop-color="#8aa0c4"/><stop offset="1" stop-color="#3a5282"/></linearGradient></defs>
<rect x="8" y="0.5" width="4" height="3.5" rx="1.5" fill="url(#bg1)"/>
<rect x="16" y="0.5" width="4" height="3.5" rx="1.5" fill="url(#bg1)"/>
<path d="M5 4 L14 4 L14 10 L5 10Z" fill="url(#bg1)"/>
<path d="M15 4 L24 4 L24 10 L15 10Z" fill="url(#bg1)"/>
<path d="M6 9 L13 9 L14 13 L14 24 Q8 26 1 24 L1 13Z" fill="url(#bg1)"/>
<path d="M16 9 L23 9 L28 13 L28 24 Q21 26 15 24 L15 13Z" fill="url(#bg1)"/>
<rect x="12" y="10" width="5" height="4" fill="#3a5282"/>
<path d="M1 22 Q7 24 14 22 M15 22 Q21 24 28 22" stroke="#2a3e68" stroke-width="1" fill="none"/>
</svg>
<div class="tt" style="left:827px;top:102px;font-size:11.5px;color:#15428b">Find</div>
<svg class="a" style="left:862px;top:66px" width="18" height="16" viewBox="0 0 18 16">
<text x="3" y="7" font-family="Liberation Sans" font-size="8" fill="#2a3040">ab</text>
<text x="6" y="15" font-family="Liberation Sans" font-size="8" font-weight="bold" fill="#208020">ac</text>
<path d="M1.5 8 v3 h4 M4 9.5 L5.5 11 L4 12.5" fill="none" stroke="#2a3a6a" stroke-width="0.9"/>
</svg>
<svg class="a" style="left:865px;top:90px" width="13" height="10" viewBox="0 0 13 10">
<path d="M0.5 3 h6 v-2.5 l6 4.5 l-6 4.5 v-2.5 h-6z" fill="#2a6ae0" stroke="#1a4ab0" stroke-width="0.8"/>
</svg>
<svg class="a" style="left:880px;top:94px" width="6" height="4"><path d="M0 0.5 L5.5 0.5 L2.75 3.5Z" fill="#15428b"/></svg>
<svg class="a" style="left:866px;top:110px" width="11" height="15" viewBox="0 0 11 15">
<path d="M0.5 0.5 L0.5 11 L3 8.5 L5.5 14 L7.5 13 L5 7.5 L9 7.5Z" fill="#fff" stroke="#202020" stroke-width="0.9"/>
</svg>
<svg class="a" style="left:880px;top:116px" width="6" height="4"><path d="M0 0.5 L5.5 0.5 L2.75 3.5Z" fill="#15428b"/></svg><div id="navpane" class="a"></div>
<!--WORK-->
<div class="a" style="left:5px;top:148px;width:899px;height:3px;background:linear-gradient(180deg,#9db3d2 0,#9db3d2 1px,#8fadd8 2px,#87a9d7 3px)"></div>

<div id="docrow" class="a"></div>
<div id="recsel" class="a"></div>
<div id="form" class="a"></div>
<div id="recbar" class="a"></div>
<div id="status" class="a"></div>

<!-- nav pane -->
<div class="a" style="left:9px;top:151px;width:26px;height:25px;background:#7aa3d8"></div>
<div class="a" style="left:10px;top:152px;width:24px;height:23px;border:1px solid #fff;border-right:none;border-bottom:none;background:linear-gradient(180deg,#f2f7fe 0,#dce9fb 50%,#c3dbfa 100%)"></div>
<svg class="a" style="left:16px;top:160px" width="10" height="9" viewBox="0 0 10 9"><path d="M1 1 L4.5 4.5 L1 8 M5 1 L8.5 4.5 L5 8" fill="none" stroke="#4a72b0" stroke-width="1.4"/></svg>
<div class="a" style="left:10px;top:176px;width:24px;height:1px;background:#fff"></div>
<div class="a" style="left:34px;top:151px;width:1px;height:461px;background:#6b97d1"></div><div class="a" style="left:8px;top:151px;width:2px;height:461px;background:#7199d2"></div>
<div class="a" style="left:35px;top:151px;width:3px;height:461px;background:#a7cafa"></div>
<div class="a" style="left:38px;top:151px;width:2px;height:461px;background:#6b97d1"></div>
<div class="tt" style="left:0;top:0;font-size:13px;font-weight:bold;color:#15428b;transform-origin:0 0;transform:translate(15px,444px) rotate(-90deg)">Navigation Pane</div>
<!-- doc tab -->
<svg class="a" style="left:40px;top:151px" width="88" height="24" viewBox="0 0 88 24">
<defs><linearGradient id="tg" x1="0" y1="0" x2="0" y2="1"><stop offset="0" stop-color="#fdeacb"/><stop offset="0.42" stop-color="#fcd79c"/><stop offset="0.55" stop-color="#fbbf5a"/><stop offset="1" stop-color="#fdd07a"/></defs>
<path d="M0.5 24 L0.5 5 Q0.5 0.5 5 0.5 L64 0.5 Q68 0.5 71 5 L78.5 18.5 Q81.5 23.5 86 23.5 L88 23.5 L88 24Z" fill="url(#tg)" stroke="#b99a6c" stroke-width="1"/>
</svg>
<svg class="a" style="left:46px;top:155px" width="16" height="15" viewBox="0 0 16 15">
<rect x="0.5" y="0.5" width="15" height="14" fill="#f0f2f6" stroke="#6a7690"/>
<rect x="1" y="1" width="14" height="2.5" fill="#c04080"/>
<path d="M3 7 h4 M3 11 h4" stroke="#6a7690" stroke-width="1"/>
<rect x="8.5" y="5.5" width="5" height="3" fill="#fff" stroke="#6a7690" stroke-width="0.8"/>
<rect x="8.5" y="9.5" width="5" height="3" fill="#fff" stroke="#6a7690" stroke-width="0.8"/>
</svg>
<div class="tt" style="left:70px;top:157px;font-size:11px;font-weight:bold;color:#000">Form17</div>
<svg class="a" style="left:887px;top:158px" width="10" height="9" viewBox="0 0 10 9"><path d="M1 0.8 L9 8.2 M9 0.8 L1 8.2" stroke="#000" stroke-width="1.7"/></svg>
<!-- record selector arrow -->
<svg class="a" style="left:47px;top:178px" width="8" height="10" viewBox="0 0 8 10"><path d="M0 0 L7 5 L0 10Z" fill="#000"/></svg>
<!-- tab control -->
<div class="a" style="left:137px;top:252px;width:599px;height:261px;border:1px solid #d6d6d6;border-top:none;background:#fff"></div>
<div class="a" style="left:736px;top:253px;width:1px;height:261px;background:#efefef"></div><div class="a" style="left:138px;top:513px;width:599px;height:1px;background:#f6f6f6"></div>
<div class="a" style="left:137px;top:227px;width:301px;height:26px;border:1px solid #d6d6d6;border-bottom:none;background:#fff"></div>
<div class="a" style="left:140px;top:230px;width:297px;height:21px;border:1px dotted #202020"></div>
<div class="a" style="left:438px;top:229px;width:297px;height:24px;border:1px solid #d9d9d9;border-bottom-color:#d9d9d9;background:#f0f0f0"></div>
<div class="tt" style="left:263px;top:232px;font-size:14px;color:#000">Centred</div>
<div class="tt" style="left:604px;top:234px;font-size:14px;color:#000"><span style="text-decoration:underline">N</span>ot Centred</div>
<!-- record bar -->
<div class="tt" style="left:45px;top:596px;font-size:11px;color:#15428b">Record:</div>
<svg class="a" style="left:90px;top:598px" width="8" height="8" viewBox="0 0 8 8"><rect x="0.5" y="0" width="1.6" height="8" fill="#15428b"/><path d="M7.5 0 L2.5 4 L7.5 8Z" fill="#15428b"/></svg>
<svg class="a" style="left:108px;top:598px" width="6" height="8" viewBox="0 0 6 8"><path d="M5.5 0 L0.5 4 L5.5 8Z" fill="#a9bedb"/></svg>
<div class="a" style="left:119px;top:594px;width:50px;height:16px;border:1px solid #a9c0e0;background:#e9f1fc"></div>
<div class="tt" style="left:121px;top:596px;font-size:11px;color:#000">1 of 1</div>
<svg class="a" style="left:177px;top:598px" width="6" height="8" viewBox="0 0 6 8"><path d="M0.5 0 L5.5 4 L0.5 8Z" fill="#a9bedb"/></svg>
<svg class="a" style="left:193px;top:598px" width="8" height="8" viewBox="0 0 8 8"><path d="M0 0 L5 4 L0 8Z" fill="#15428b"/><rect x="5.6" y="0" width="1.6" height="8" fill="#15428b"/></svg>
<svg class="a" style="left:208px;top:597px" width="12" height="10" viewBox="0 0 12 10"><path d="M0 1 L4 5 L0 9Z" fill="#b8c8e0"/><rect x="6" y="2" width="5" height="6" fill="#f4eacc"/><path d="M5.5 1.5 h1 M10.5 1.5 h1 M5.5 8.5 h1 M10.5 8.5 h1" stroke="#e8d8a0"/></svg>
<div class="a" style="left:226px;top:593px;width:2px;height:18px;background:#a0b8dc;border-right:1px solid #f4f8fe"></div>
<svg class="a" style="left:235px;top:595px" width="16" height="13" viewBox="0 0 16 13">
<path d="M0.5 0.5 L12 0.5 L8 5 L8 11 L5 12.5 L5 5Z" fill="#e0e4ea" stroke="#a0a8b4" stroke-width="0.9"/>
<path d="M7 5 L13 12 M13 5 L7 12" stroke="#a0a8b4" stroke-width="1.4"/>
</svg>
<div class="tt" style="left:253px;top:596px;font-size:11px;color:#a8aeb6">No Filter</div>
<div class="a" style="left:306px;top:593px;width:2px;height:18px;background:#a0b8dc;border-right:1px solid #f4f8fe"></div>
<div class="a" style="left:312px;top:594px;width:70px;height:16px;border:1px solid #b4c8e4;background:#eef4fc"></div>
<div class="tt" style="left:314px;top:596px;font-size:11px;color:#000">Search</div>
<!-- status bar -->
<div class="tt" style="left:14px;top:616px;font-size:11.5px;color:#15428b">Form View</div>
<div class="a" style="left:453px;top:613px;width:2px;height:20px;background:#9ebbe0;border-right:1px solid #eaf2fc"></div>
<div class="a" style="left:771px;top:613px;width:2px;height:20px;background:#9ebbe0;border-right:1px solid #eaf2fc"></div>
<div class="a" style="left:779px;top:613px;width:109px;height:18px;border:1px solid #93b2de;border-radius:3px;background:linear-gradient(180deg,#e4eefb 0,#d0e0f5 50%,#bcd2f0 55%,#cfe0f6 100%)"></div>
<div class="a" style="left:780px;top:614px;width:17px;height:16px;background:linear-gradient(180deg,#ffe9a8 0,#ffd67a 50%,#ffbe40 55%,#ffd88a 100%);border-radius:2px 0 0 2px"></div>
<div class="a" style="left:797px;top:614px;width:1px;height:16px;background:#a8c0e0"></div>
<div class="a" style="left:815px;top:614px;width:1px;height:16px;background:#a8c0e0"></div>
<div class="a" style="left:833px;top:614px;width:1px;height:16px;background:#a8c0e0"></div>
<div class="a" style="left:851px;top:614px;width:1px;height:16px;background:#a8c0e0"></div>
<div class="a" style="left:869px;top:614px;width:1px;height:16px;background:#a8c0e0"></div>
<svg class="a" style="left:782px;top:616px" width="104" height="12" viewBox="0 0 104 12">
<g fill="none" stroke="#505050" stroke-width="1.1">
<rect x="1.5" y="1.5" width="11" height="9" fill="#fff"/><path d="M1.5 3.5 h11 M3.5 6 h3 M3.5 8.5 h3"/><rect x="7.5" y="5.5" width="3.5" height="1.5"/><rect x="7.5" y="8" width="3.5" height="1.5"/>
<rect x="19.5" y="1.5" width="11" height="9"/><path d="M19.5 3.5 h11 M22 1.5 v9 M22 6 h8 M22 8.5 h8 M26 3.5 v7"/>
</g>
<g fill="#606060"><rect x="38" y="1" width="3.5" height="3"/><rect x="42" y="1" width="3.5" height="3"/><rect x="38" y="4.5" width="3.5" height="3"/><rect x="42" y="4.5" width="3.5" height="3"/><rect x="46" y="4.5" width="3.5" height="3"/><rect x="38" y="8" width="3.5" height="3"/><rect x="42" y="8" width="3.5" height="3"/><rect x="46" y="8" width="3.5" height="3"/></g>
<g fill="none" stroke="#505050" stroke-width="1.1">
<path d="M56.5 10.5 v-6 l2 -2 v8 M59.5 10.5 v-9 h2 v9 M62 10.5 v-4 h2 v4 M55.5 10.5 h11"/>
<path d="M74 1 h10 M74 11 h10 M75.5 1 v10 M82.5 1 v10 M77 4 q3 0 3 2 q0 2 -3 2"/>
<path d="M92 1 l5 5 M92 10.5 h10 M99 9 l4 -7"/><path d="M93 8 h1 M95 8 h1 M97 8 h1 M99 8 h1" />
</g>
</svg>
<svg class="a" style="left:892px;top:619px" width="11" height="11" viewBox="0 0 11 11"><g fill="#7090b8"><rect x="8" y="0" width="2" height="2"/><rect x="5" y="3" width="2" height="2"/><rect x="8" y="3" width="2" height="2"/><rect x="2" y="6" width="2" height="2"/><rect x="5" y="6" width="2" height="2"/><rect x="8" y="6" width="2" height="2"/></g></svg>

<div class="a" style="left:5px;top:34px;width:1px;height:600px;background:#4a6a90"></div>
<div class="a" style="left:5px;top:633px;width:900px;height:1px;background:#3d5575"></div>
<div class="a" style="left:904px;top:5px;width:1px;height:629px;background:#2e4a6e"></div>
</body></html>
